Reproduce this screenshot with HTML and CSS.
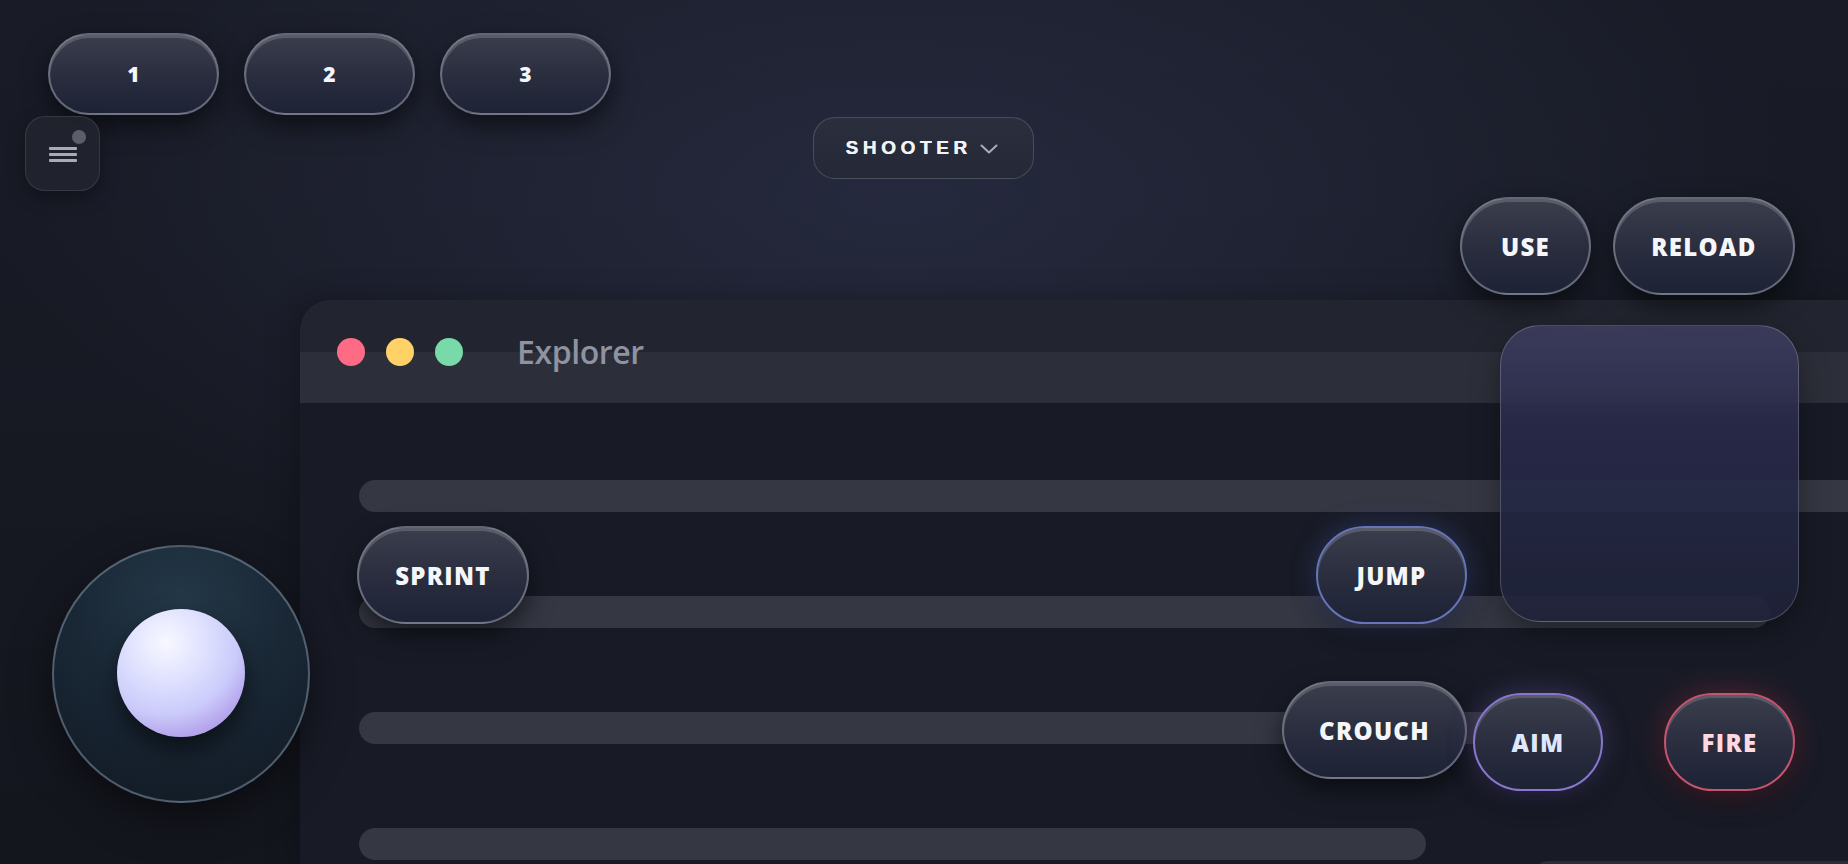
FILE: index.html
```html
<!DOCTYPE html>
<html lang="en">
<head>
    <meta charset="UTF-8">
    <meta name="viewport" content="width=device-width, initial-scale=1.0">
    <title>Explorer</title>
    <link rel="stylesheet" href="styles.css">
</head>

<body>
<div class="stage">

    <!-- app window sitting under the touch controls -->
    <section class="window">
        <header class="window__bar">
            <span class="light light--close"></span>
            <span class="light light--min"></span>
            <span class="light light--max"></span>
            <h1 class="window__title">Explorer</h1>
        </header>
        <div class="window__body">
            <div class="line line--1"></div>
            <div class="line line--2"></div>
            <div class="line line--3"></div>
            <div class="line line--4"></div>
            <div class="line line--5"></div>
        </div>
    </section>

    <!-- touch controller overlay -->
    <div class="hud">
        <div class="slots">
            <button class="key key--slot">1</button>
            <button class="key key--slot">2</button>
            <button class="key key--slot">3</button>
        </div>

        <button class="menu" aria-label="Menu">
            <span class="menu__icon"></span>
            <span class="menu__badge"></span>
        </button>

        <button class="mode">
            SHOOTER
            <svg class="mode__chevron" width="18" height="10" viewBox="0 0 18 10">
                <path d="M1.5 1.5 L9 8.5 L16.5 1.5" fill="none" stroke="#a9adbb" stroke-width="2" stroke-linecap="round" stroke-linejoin="round"/>
            </svg>
        </button>

        <div class="actions">
            <button class="key key--use">USE</button>
            <button class="key key--reload">RELOAD</button>
        </div>

        <div class="pad"></div>

        <button class="key key--sprint">SPRINT</button>
        <button class="key key--jump">JUMP</button>
        <button class="key key--crouch">CROUCH</button>
        <button class="key key--aim">AIM</button>
        <button class="key key--fire">FIRE</button>

        <div class="stick">
            <div class="stick__knob"></div>
        </div>
    </div>

</div>
</body>
</html>
```

FILE: styles.css
```css
html {
    box-sizing: border-box;
}

*,
*::before,
*::after {
    box-sizing: inherit;
}

body {
    margin: 0;
    height: 100vh;
    overflow: hidden;
    font-family: "Open Sans", "Noto Sans", sans-serif;
    background-color: #15181f;
    background-image:
        radial-gradient(ellipse 900px 420px at 900px 200px, rgba(40, 44, 66, 0.85), rgba(40, 44, 66, 0) 100%),
        linear-gradient(180deg, #191c27, #14161e);
}

button {
    font-family: inherit;
    cursor: pointer;
}

.stage {
    position: relative;
    width: 100%;
    height: 100%;
}

/* ---------- window ---------- */

.window {
    position: absolute;
    left: 300px;
    top: 300px;
    width: 1548px;
    height: 564px;
    overflow: hidden;
    background-color: #181b26;
    border-top-left-radius: 30px;
    box-shadow: -6px 0 30px rgba(0, 0, 0, 0.25);
}

.window__bar {
    display: flex;
    align-items: center;
    height: 103px;
    padding-left: 37px;
    gap: 21px;
    border-top-left-radius: 30px;
    background: linear-gradient(180deg, #22252f 0, #22252f 52px, #2c2e39 52px, #2c2e39 100%);
}

.light {
    width: 28px;
    height: 28px;
    border-radius: 50%;
}

.light--close { background-color: #ff6b84; }
.light--min   { background-color: #ffd166; }
.light--max   { background-color: #78d9a9; }

.window__title {
    margin: 0 0 0 33px;
    font-size: 32px;
    font-weight: 600;
    color: #8e93a1;
    letter-spacing: -0.4px;
}

.window__body {
    display: flex;
    flex-direction: column;
    align-items: flex-start;
    gap: 84px;
    padding: 77px 0 0 59px;
}

.line {
    flex-shrink: 0;
    height: 32px;
    border-radius: 16px;
    background-color: #353743;
}

.line--1 { width: 1600px; }
.line--2 { width: 1411px; }
.line--3 { width: 1241px; }
.line--4 { width: 1067px; }

.line--5 {
    width: 400px;
    margin: -83px 0 0 1173px;
    background-color: #2a2c37;
}

/* ---------- overlay controls ---------- */

.key {
    position: absolute;
    height: 98px;
    padding: 0;
    border-radius: 50px;
    border: 2px solid rgba(196, 200, 214, 0.42);
    background: linear-gradient(180deg, #3b3e4c 0%, #2a2e3f 50%, #1d2235 100%);
    box-shadow:
        inset 0 3px 0 rgba(255, 255, 255, 0.16),
        0 10px 26px rgba(0, 0, 0, 0.55);
    color: #f5f6fa;
    font-size: 24px;
    font-weight: 800;
    letter-spacing: 1.3px;
}

.slots {
    position: absolute;
    left: 48px;
    top: 33px;
    display: flex;
    gap: 25px;
}

.key--slot {
    position: static;
    width: 171px;
    height: 82px;
    font-size: 21px;
    letter-spacing: 0;
}

.actions {
    position: absolute;
    left: 1460px;
    top: 197px;
    display: flex;
    gap: 22px;
}

.actions .key {
    position: static;
}

.key--use    { width: 131px; }
.key--reload { width: 182px; }

.key--sprint {
    left: 357px;
    top: 526px;
    width: 172px;
}

.key--jump {
    left: 1316px;
    top: 526px;
    width: 151px;
    border-color: #6674b8;
    box-shadow:
        inset 0 3px 0 rgba(255, 255, 255, 0.16),
        0 0 26px rgba(90, 110, 200, 0.35),
        0 10px 26px rgba(0, 0, 0, 0.45);
}

.key--crouch {
    left: 1282px;
    top: 681px;
    width: 185px;
}

.key--aim {
    left: 1473px;
    top: 693px;
    width: 130px;
    color: #dfe7ff;
    border-color: #8877cc;
    box-shadow:
        inset 0 3px 0 rgba(255, 255, 255, 0.16),
        0 0 26px rgba(130, 110, 210, 0.35),
        0 10px 26px rgba(0, 0, 0, 0.45);
}

.key--fire {
    left: 1664px;
    top: 693px;
    width: 131px;
    color: #ffd9e0;
    border-color: #c7546f;
    box-shadow:
        inset 0 3px 0 rgba(255, 255, 255, 0.16),
        0 0 30px rgba(200, 60, 90, 0.35),
        0 10px 26px rgba(0, 0, 0, 0.45);
}

/* menu toggle */

.menu {
    position: absolute;
    left: 25px;
    top: 116px;
    width: 75px;
    height: 75px;
    padding: 0;
    border-radius: 20px;
    border: 1.5px solid rgba(255, 255, 255, 0.1);
    background-color: rgba(34, 37, 47, 0.85);
    box-shadow: 0 6px 18px rgba(0, 0, 0, 0.35);
}

.menu__icon {
    position: absolute;
    left: 23px;
    top: 30px;
    width: 28px;
    height: 3px;
    border-radius: 1px;
    background-color: #a9acb6;
    box-shadow: 0 6px 0 #a9acb6, 0 12px 0 #a9acb6;
}

.menu__badge {
    position: absolute;
    right: 13px;
    top: 13px;
    width: 14px;
    height: 14px;
    border-radius: 50%;
    background-color: #5b5e6b;
}

/* game mode picker */

.mode {
    position: absolute;
    left: 813px;
    top: 117px;
    width: 221px;
    height: 62px;
    display: flex;
    align-items: center;
    justify-content: center;
    gap: 8px;
    padding: 0 4px 0 0;
    border-radius: 22px;
    border: 1.5px solid rgba(255, 255, 255, 0.16);
    background: linear-gradient(180deg, #2b2e3c, #252836);
    color: #f2f3f7;
    font-family: "Liberation Sans", Arial, sans-serif;
    font-size: 19px;
    font-weight: 700;
    letter-spacing: 4.6px;
    text-shadow: 0.4px 0 0 #f2f3f7;
}

.mode__chevron {
    margin-top: 2px;
}

/* look / aim touch pad */

.pad {
    position: absolute;
    left: 1500px;
    top: 325px;
    width: 299px;
    height: 297px;
    border-radius: 40px;
    border: 1.5px solid rgba(255, 255, 255, 0.2);
    background: linear-gradient(180deg, rgba(62, 60, 94, 0.92) 0%, rgba(40, 42, 74, 0.9) 35%, rgba(31, 34, 56, 0.88) 100%);
    box-shadow: 0 12px 30px rgba(0, 0, 0, 0.35);
}

/* movement stick */

.stick {
    position: absolute;
    left: 52px;
    top: 545px;
    width: 258px;
    height: 258px;
    display: flex;
    align-items: center;
    justify-content: center;
    border-radius: 50%;
    border: 2px solid rgba(150, 168, 186, 0.45);
    background: radial-gradient(circle at 50% 22%, #243848 0%, #1a2836 45%, #101822 100%);
    box-shadow: 0 14px 40px rgba(0, 0, 0, 0.5);
}

.stick__knob {
    width: 128px;
    height: 128px;
    margin-top: -2px;
    border-radius: 50%;
    background: radial-gradient(circle at 38% 26%, #f8f8ff 0%, #e2e4ff 28%, #cbcbfb 58%, #a98ee4 88%, #9478d6 100%);
    box-shadow: 0 12px 24px rgba(0, 0, 0, 0.55);
}
```
